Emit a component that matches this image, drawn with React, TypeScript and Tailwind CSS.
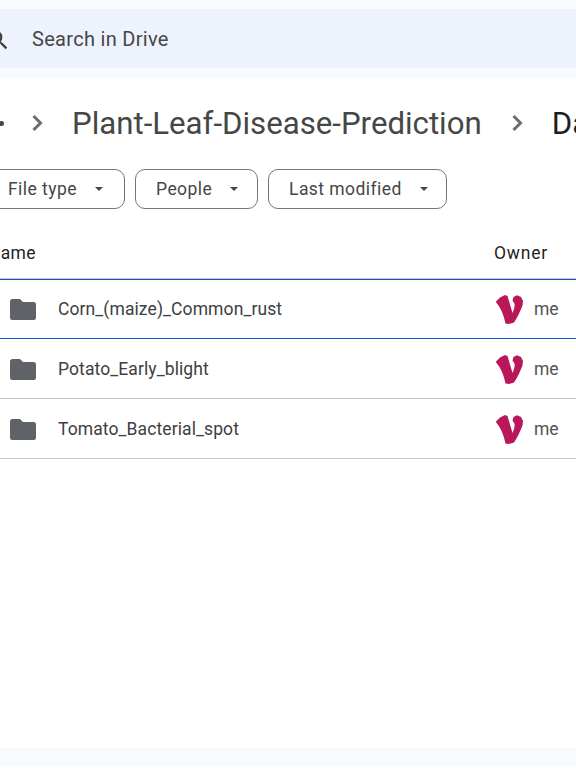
function Caret() {
  return (
    <svg width="8" height="4" viewBox="0 0 8 4" className="shrink-0 fill-[#444746]">
      <path d="M0 0h8L4 4z" />
    </svg>
  );
}

function Chevron() {
  return (
    <svg width="12" height="18" viewBox="0 0 12 18" className="shrink-0" fill="none" stroke="#6b6e6f" strokeWidth="3">
      <path d="M2.500 2 9.500 9l-7 7" />
    </svg>
  );
}

function Folder() {
  return (
    <svg width="26" height="21" viewBox="0 0 26 21" className="shrink-0 fill-[#5f6368]">
      <path d="M2.500 0H10l3 3h10.500A2.500 2.500 0 0 1 26 5.500v13a2.500 2.500 0 0 1-2.500 2.500h-21A2.500 2.500 0 0 1 0 18.500v-16A2.500 2.500 0 0 1 2.500 0z" />
    </svg>
  );
}

function Logo() {
  return (
    <svg width="28" height="29" viewBox="0 0 28 29" className="shrink-0 fill-[#b9175a]">
      <path d="M0 6.500 4 2.500 9 0l2.500 1 5 17c1.500-3.500 2.500-7 2-9.500l-2-3 1-3.500L21 .3 25 2l2 4-.5 4.500C24.500 16 21 23 18 27.500L13 29l-3.500-.5C8 21 5 13 .5 8z" />
    </svg>
  );
}

function Chip({ label, className }: { label: string; className: string }) {
  return (
    <div className={`flex h-10 items-center rounded-[10px] border border-[#747775] text-[17.500px] tracking-[0.45px] text-[#444746] ${className}`}>
      <span>{label}</span>
      <Caret />
    </div>
  );
}

function Row({ name, border }: { name: string; border: string }) {
  return (
    <div className={`flex h-[60px] items-center ${border} pl-[10px]`}>
      <Folder />
      <span className="ml-[22px] w-[438px] shrink-0 text-[17.500px] tracking-[0.1px] text-[#3c4043]">{name}</span>
      <Logo />
      <span className="ml-[10px] text-[17.500px] text-[#505357]">me</span>
    </div>
  );
}

export default function App() {
  return (
    <div className="flex h-[768px] w-[576px] flex-col overflow-hidden bg-white font-['Roboto',sans-serif]">
      <header className="h-[79px] shrink-0 bg-[#f8fafd] pt-[9px]">
        <div className="flex h-[59px] items-center overflow-hidden bg-[#edf2fc]">
          <svg width="26" height="26" viewBox="0 0 24 24" className="mt-[3px] -ml-[15px] shrink-0 fill-[#3a3c3b]">
            <path d="M15.500 14h-.79l-.28-.27A6.471 6.471 0 0 0 16 9.500 6.500 6.500 0 1 0 9.500 16c1.610 0 3.090-.59 4.230-1.570l.27.28v.79l5 4.990L20.490 19l-4.990-5zm-6 0C7.010 14 5 11.990 5 9.500S7.010 5 9.500 5 14 7.010 14 9.500 11.990 14 9.500 14z" />
          </svg>
          <span className="ml-[21px] text-[20px] tracking-[0.3px] text-[#444746]">Search in Drive</span>
        </div>
      </header>

      <nav className="mt-[20px] flex h-[48px] shrink-0 items-center whitespace-nowrap">
        <span className="-ml-[1px] h-[5px] w-[5px] shrink-0 rounded-full bg-[#444746]" />
        <span className="ml-[27px]"><Chevron /></span>
        <span className="ml-[29px] pt-[2px] text-[31.200px] text-[#444746]">Plant-Leaf-Disease-Prediction</span>
        <span className="ml-[29px]"><Chevron /></span>
        <span className="ml-[29px] pt-[2px] text-[31.200px] text-[#1f1f1f]">Data</span>
      </nav>

      <div className="mt-[22px] flex h-10 shrink-0 gap-[10px] whitespace-nowrap">
        <Chip label="File type" className="-ml-[20px] w-[145px] gap-[18px] pl-[27px]" />
        <Chip label="People" className="w-[123px] gap-[18px] pl-[20px]" />
        <Chip label="Last modified" className="w-[179px] gap-[18px] pl-[20px]" />
      </div>

      <div className="mt-[20px] flex h-[50px] shrink-0 items-center border-b border-[#c7c7c7] whitespace-nowrap">
        <span className="-ml-[12px] w-[506px] shrink-0 text-[17.500px] tracking-[0.3px] text-[#1f1f1f]">Name</span>
        <span className="text-[17.500px] tracking-[0.8px] text-[#1f1f1f]">Owner</span>
      </div>

      <Row name="Corn_(maize)_Common_rust" border="border-y border-[#0b57d0]" />
      <Row name="Potato_Early_blight" border="border-b border-[#c7c7c7] pt-px" />
      <Row name="Tomato_Bacterial_spot" border="border-b border-[#c7c7c7] pt-px" />

      <div className="flex-1" />
      <div className="mb-[1px] h-[19px] shrink-0 bg-[#f8fafd]" />
    </div>
  );
}
